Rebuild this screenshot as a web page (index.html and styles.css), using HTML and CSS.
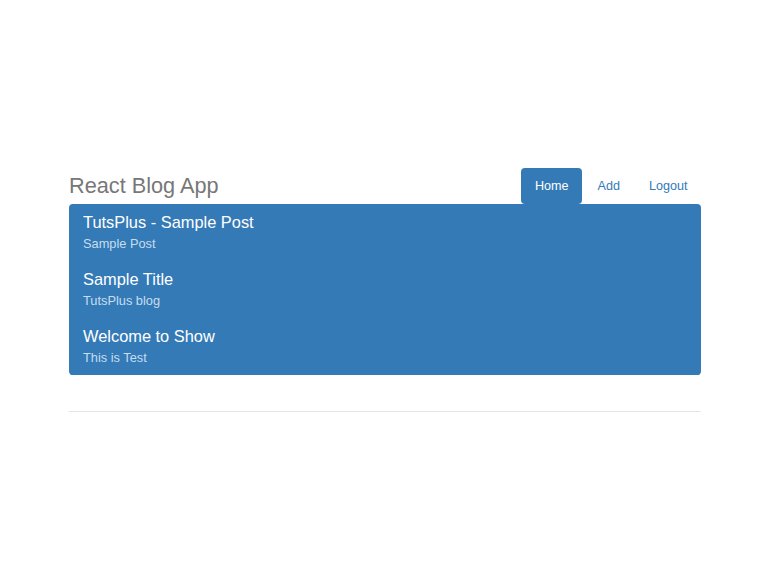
FILE: index.html
```html
<!DOCTYPE html>
<html lang="en">
<head>
  <meta charset="UTF-8" />
  <title>React Blog App</title>
  <meta name="viewport" content="width=device-width, initial-scale=1.0">
  <link rel="stylesheet" href="styles.css">
</head>
<body>
  <div class="container">
    <div class="header">
      <h3 class="brand">React Blog App</h3>
      <ul class="nav-pills">
        <li class="active"><a href="#">Home</a></li>
        <li><a href="#">Add</a></li>
        <li><a href="#">Logout</a></li>
      </ul>
    </div>
    <div class="list-group">
      <a href="#" class="list-group-item">
        <h4 class="item-heading">TutsPlus - Sample Post</h4>
        <p class="item-text">Sample Post</p>
      </a>
      <a href="#" class="list-group-item">
        <h4 class="item-heading">Sample Title</h4>
        <p class="item-text">TutsPlus blog</p>
      </a>
      <a href="#" class="list-group-item">
        <h4 class="item-heading">Welcome to Show</h4>
        <p class="item-text">This is Test</p>
      </a>
    </div>
    <div class="footer"></div>
  </div>
</body>
</html>
```

FILE: styles.css
```css
body {
  margin: 0;
  padding: 168px 0 0 2px;
  background: #fff;
  color: #333;
  font-family: "Liberation Sans", Arial, sans-serif;
  font-size: 12.8px;
}
.container {
  width: 632px;
  margin: 0 auto;
}
.header {
  display: flex;
  justify-content: space-between;
  align-items: flex-start;
}
.brand {
  margin: 0;
  font-size: 21.7px;
  font-weight: normal;
  line-height: 36px;
  color: #777;
}
.nav-pills {
  display: flex;
  gap: 2px;
  list-style: none;
  margin: 0;
  padding: 0;
}
.nav-pills a {
  display: block;
  padding: 0 13.5px;
  font-size: 12.6px;
  line-height: 36px;
  border-radius: 4px;
  color: #337ab7;
  text-decoration: none;
}
.nav-pills .active a {
  background: #337ab7;
  color: #fff;
}
.list-group {
  margin-bottom: 36px;
  border-radius: 4px;
  overflow: hidden;
  background: #337ab7;
}
.list-group-item {
  display: block;
  padding: 9px 14px;
  border-bottom: 1px solid #337ab7;
  text-decoration: none;
}
.item-heading {
  margin: 0 0 5px;
  font-size: 16.4px;
  font-weight: normal;
  line-height: 18px;
  color: #fff;
}
.item-text {
  margin: 0;
  font-size: 12.8px;
  line-height: 15px;
  color: #c7ddef;
}
.footer {
  border-top: 1px solid #e5e5e5;
  height: 150px;
}
```
